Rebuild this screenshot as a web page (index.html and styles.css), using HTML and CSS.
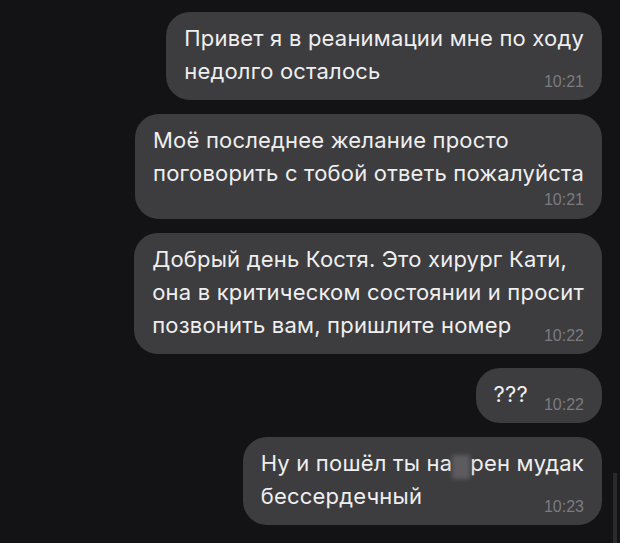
FILE: index.html
```html
<!DOCTYPE html>
<html lang="ru">
<head>
  <meta charset="UTF-8" />
  <title>Чат</title>
  <link rel="stylesheet" href="styles.css">
</head>
<body>
  <div class="chat">
    <div class="msg">
      Привет я в реанимации мне по ходу<br>
      недолго осталось<span class="time">10:21</span>
    </div>

    <div class="msg">
      Моё последнее желание просто<br>
      поговорить с тобой ответь пожалуйста
      <div class="time time-row">10:21</div>
    </div>

    <div class="msg">
      Добрый день Костя. Это хирург Кати,<br>
      она в критическом состоянии и просит<br>
      позвонить вам, пришлите номер<span class="time">10:22</span>
    </div>

    <div class="msg">
      ???<span class="time">10:22</span>
    </div>

    <div class="msg">
      Ну и пошёл ты на<span class="censor">х</span>рен мудак<br>
      бессердечный<span class="time">10:23</span>
    </div>
  </div>

  <div class="scrollbar"></div>
</body>
</html>
```

FILE: styles.css
```css
body {
  margin: 0;
  background: #131214;
  font-family: Inter, 'Liberation Sans', Arial, sans-serif;
  color: #efefef;
  height: 543px;
  overflow: hidden;
}

.chat {
  display: flex;
  flex-direction: column;
  align-items: flex-end;
  gap: 14px;
  padding: 12px 18px 0 0;
}

.msg {
  display: inline-block;
  background: #3d3d40;
  border-radius: 24px;
  padding: 10px 18px 12px;
  font-size: 22px;
  line-height: 33px;
  letter-spacing: 0.2px;
}

.time {
  float: right;
  margin: 21px 0 0 16px;
  font-family: 'Liberation Sans', Arial, sans-serif;
  font-size: 16px;
  line-height: 12px;
  letter-spacing: 0;
  color: #7b7b7f;
}

.time-row {
  float: none;
  text-align: right;
  line-height: 18px;
  margin: 1px 0 -2px;
}

.censor {
  display: inline-block;
  color: transparent;
  background: #5c5c60;
  filter: blur(2px);
  width: 18px;
  line-height: 24px;
  vertical-align: -4px;
}

.scrollbar {
  position: fixed;
  right: 3px;
  top: 473px;
  bottom: 0;
  width: 4px;
  background: #2a2a2d;
}
```
